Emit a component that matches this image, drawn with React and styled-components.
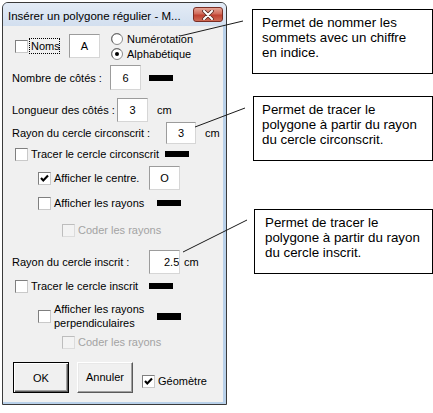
import React from "react";
import styled, { createGlobalStyle } from "styled-components";

const GlobalStyle = createGlobalStyle`
  html, body { margin: 0; padding: 0; background: #fff; }
  body {
    width: 433px; height: 413px; overflow: hidden;
    font-family: "Liberation Sans", Arial, sans-serif;
  }
`;

const Page = styled.div`
  position: relative;
  width: 433px;
  height: 413px;
  box-sizing: border-box;
  padding: 2px 0 0 2px;
  display: flex;
  align-items: flex-start;
`;

const Dialog = styled.div`
  width: 225px;
  height: 403px;
  box-sizing: border-box;
  flex-shrink: 0;
  border: 1px solid #3a3a3a;
  border-radius: 6px 6px 0 0;
  background: #b9d1ea;
  display: flex;
  flex-direction: column;
  overflow: hidden;
`;

const TitleBar = styled.div`
  height: 23px;
  flex-shrink: 0;
  box-sizing: border-box;
  display: flex;
  align-items: center;
  justify-content: space-between;
  padding: 0 3px 0 5px;
  background: linear-gradient(#e3ebf6, #d2dfef);
`;

const Title = styled.span`
  font-size: 11.5px;
  color: #000;
  padding-top: 2px;
  white-space: nowrap;
`;

const CloseButton = styled.span`
  width: 30px;
  height: 15px;
  box-sizing: border-box;
  border: 1px solid #7a2d24;
  border-radius: 3px;
  background: linear-gradient(#e6a596, #d06a5a 45%, #c04233 55%, #cf6b55);
  display: flex;
  align-items: center;
  justify-content: center;
`;

const Client = styled.div`
  flex: 1;
  margin: 0 3px 2px 0;
  background: #f0f0f0;
  display: flex;
  flex-direction: column;
  font-size: 11px;
  color: #000;
`;

const Row = styled.div`
  display: flex;
  align-items: center;
  flex-shrink: 0;
  height: ${(p) => p.$h}px;
  margin-top: ${(p) => p.$mt}px;
  padding-left: ${(p) => p.$pl}px;
`;

const Label = styled.span`
  width: ${(p) => p.$w}px;
  flex-shrink: 0;
  white-space: nowrap;
`;

const TextBox = styled.span`
  width: ${(p) => p.$w}px;
  height: ${(p) => p.$h}px;
  margin-left: ${(p) => p.$ml || 0}px;
  flex-shrink: 0;
  box-sizing: border-box;
  background: #fff;
  border: 1px solid;
  border-color: #9c9c9c #d6d6d6 #d6d6d6 #9c9c9c;
  display: flex;
  align-items: center;
  justify-content: ${(p) => (p.$left ? "flex-start" : "center")};
  padding-left: ${(p) => p.$pad || 0}px;
  overflow: hidden;
  white-space: nowrap;
`;

const Clip = styled.span`
  display: block;
  width: ${(p) => p.$w}px;
  overflow: hidden;
  white-space: nowrap;
`;

const Unit = styled.span`
  margin-left: ${(p) => p.$ml}px;
`;

const Swatch = styled.span`
  width: 24px;
  height: ${(p) => p.$h || 6}px;
  margin-left: ${(p) => p.$ml || 0}px;
  flex-shrink: 0;
  background: #000;
`;

const Box = styled.span`
  width: 13px;
  height: 13px;
  flex-shrink: 0;
  box-sizing: border-box;
  border: 1px solid;
  border-color: ${(p) =>
    p.$disabled ? "#bdbdbd #dcdcdc #dcdcdc #bdbdbd" : "#7f7f7f #c9c9c9 #c9c9c9 #7f7f7f"};
  background: ${(p) => (p.$disabled ? "#f3f3f3" : "#fff")};
  display: flex;
  align-items: center;
  justify-content: center;
`;

const CheckField = styled.span`
  display: flex;
  align-items: center;
  gap: 3px;
  flex-shrink: 0;
  width: ${(p) => (p.$w ? `${p.$w}px` : "auto")};
  margin-left: ${(p) => p.$ml || 0}px;
  align-self: ${(p) => (p.$bottom ? "flex-end" : "center")};
  margin-bottom: ${(p) => (p.$bottom ? 5 : 0)}px;
  color: ${(p) => (p.$disabled ? "#a3a3a3" : "#000")};
`;

const CheckText = styled.span`
  line-height: 14px;
  white-space: nowrap;
`;

const FocusLabel = styled.span`
  width: 31px;
  height: 16px;
  margin-left: 1px;
  flex-shrink: 0;
  box-sizing: border-box;
  border: 1px dotted #000;
  padding-left: 1px;
  display: flex;
  align-items: center;
`;

const RadioGroup = styled.span`
  display: flex;
  flex-direction: column;
  margin-left: ${(p) => p.$ml}px;
`;

const RadioItem = styled.span`
  display: flex;
  align-items: center;
  gap: 4px;
  height: 15px;
`;

const ButtonBtn = styled.span`
  width: 56px;
  height: 31px;
  flex-shrink: 0;
  margin-left: ${(p) => p.$ml || 0}px;
  box-sizing: border-box;
  background: #f0f0f0;
  border: 1px solid;
  border-color: ${(p) => (p.$default ? "#000" : "#fff #5a5a5a #5a5a5a #fff")};
  box-shadow: ${(p) =>
    p.$default
      ? "inset 1px 1px #fff, inset -1px -1px #5a5a5a, inset -2px -2px #a0a0a0"
      : "inset -1px -1px #a0a0a0, inset 1px 1px #e8e8e8"};
  display: flex;
  align-items: center;
  justify-content: center;
  padding-bottom: ${(p) => p.$raise || 0}px;
`;

const Notes = styled.div`
  display: flex;
  flex-direction: column;
  margin-left: 25px;
`;

const Note = styled.div`
  width: ${(p) => p.$w}px;
  height: 65px;
  margin-top: ${(p) => p.$mt}px;
  margin-left: ${(p) => p.$ml}px;
  box-sizing: border-box;
  border: 1px solid #000;
  background: #fff;
  padding: 5px 0 0 ${(p) => p.$pl}px;
  font-size: 13.33px;
  line-height: 15px;
  color: #000;
  white-space: nowrap;
`;

const Overlay = styled.svg`
  position: absolute;
  left: 0;
  top: 0;
  pointer-events: none;
`;

function Check({ checked, disabled }) {
  return (
    <Box $disabled={disabled}>
      {checked && (
        <svg width="9" height="9" viewBox="0 0 9 9">
          <polyline points="1,4 3.3,6.5 8,1.5" fill="none" stroke="#000" strokeWidth="2.1" />
        </svg>
      )}
    </Box>
  );
}

function Radio({ checked }) {
  return (
    <svg width="12" height="12" viewBox="0 0 12 12" style={{ flexShrink: 0 }}>
      <circle cx="6" cy="6" r="5.5" fill="#fff" stroke="#8a8a8a" />
      <path d="M2.2 9.5 A5 5 0 0 1 9.5 2.2" fill="none" stroke="#6a6a6a" strokeWidth="1" />
      {checked && <circle cx="6" cy="6" r="2" fill="#000" />}
    </svg>
  );
}

function Field({ w, ml, checked, disabled, bottom, children }) {
  return (
    <CheckField $w={w} $ml={ml} $disabled={disabled} $bottom={bottom}>
      <Check checked={checked} disabled={disabled} />
      <CheckText>{children}</CheckText>
    </CheckField>
  );
}

export default function App() {
  return (
    <>
      <GlobalStyle />
      <Page>
        <Dialog>
          <TitleBar>
            <Title>Insérer un polygone régulier - M...</Title>
            <CloseButton>
              <svg width="12" height="10" viewBox="0 0 12 10">
                <path d="M2 1 L10 9 M10 1 L2 9" stroke="#5a2a24" strokeWidth="3.6" strokeLinecap="round" />
                <path d="M2 1 L10 9 M10 1 L2 9" stroke="#fff" strokeWidth="2" strokeLinecap="round" />
              </svg>
            </CloseButton>
          </TitleBar>
          <Client>
            <Row $mt={5} $h={30} $pl={12}>
              <Check />
              <FocusLabel>Noms</FocusLabel>
              <TextBox $w={31} $h={24} $ml={9}>A</TextBox>
              <RadioGroup $ml={11}>
                <RadioItem>
                  <Radio />
                  Numérotation
                </RadioItem>
                <RadioItem>
                  <Radio checked />
                  Alphabétique
                </RadioItem>
              </RadioGroup>
            </Row>

            <Row $mt={4} $h={25} $pl={9}>
              <Label $w={98}>Nombre de côtés :</Label>
              <TextBox $w={31} $h={25}>6</TextBox>
              <Swatch $ml={8} />
            </Row>

            <Row $mt={8} $h={24} $pl={9}>
              <Label $w={105}>Longueur des côtés :</Label>
              <TextBox $w={31} $h={24}>3</TextBox>
              <Unit $ml={9}>cm</Unit>
            </Row>

            <Row $mt={0} $h={22} $pl={9}>
              <Label $w={154}>Rayon du cercle circonscrit :</Label>
              <TextBox $w={30} $h={22}>3</TextBox>
              <Unit $ml={9}>cm</Unit>
            </Row>

            <Row $mt={2} $h={16} $pl={12}>
              <Field w={150}>Tracer le cercle circonscrit</Field>
              <Swatch />
            </Row>

            <Row $mt={4} $h={24} $pl={35}>
              <Field w={111} checked>Afficher le centre.</Field>
              <TextBox $w={31} $h={24}>O</TextBox>
            </Row>

            <Row $mt={5} $h={16} $pl={35}>
              <Field w={119}>Afficher les rayons</Field>
              <Swatch />
            </Row>

            <Row $mt={11} $h={16} $pl={59}>
              <Field disabled>Coder les rayons</Field>
            </Row>

            <Row $mt={12} $h={24} $pl={9}>
              <Label $w={137}>Rayon du cercle inscrit :</Label>
              <TextBox $w={31} $h={24} $left $pad={14}>
                <Clip $w={15}>2.59</Clip>
              </TextBox>
              <Unit $ml={4}>cm</Unit>
            </Row>

            <Row $mt={4} $h={16} $pl={12}>
              <Field w={134}>Tracer le cercle inscrit</Field>
              <Swatch />
            </Row>

            <Row $mt={8} $h={28} $pl={35}>
              <Field w={119}>
                Afficher les rayons
                <br />
                perpendiculaires
              </Field>
              <Swatch $h={7} />
            </Row>

            <Row $mt={4} $h={16} $pl={59}>
              <Field disabled>Coder les rayons</Field>
            </Row>

            <Row $mt={12} $h={31} $pl={10}>
              <ButtonBtn $default>OK</ButtonBtn>
              <ButtonBtn $ml={8} $raise={2}>Annuler</ButtonBtn>
              <Field ml={9} checked bottom>Géomètre</Field>
            </Row>
          </Client>
        </Dialog>

        <Notes>
          <Note $mt={7} $ml={0} $w={181} $pl={9}>
            Permet de nommer les
            <br />
            sommets avec un chiffre
            <br />
            en indice.
          </Note>
          <Note $mt={22} $ml={1} $w={180} $pl={8}>
            Permet de tracer le
            <br />
            polygone à partir du rayon
            <br />
            du cercle circonscrit.
          </Note>
          <Note $mt={48} $ml={2} $w={179} $pl={10}>
            Permet de tracer le
            <br />
            polygone à partir du rayon
            <br />
            du cercle inscrit.
          </Note>
        </Notes>

        <Overlay width="433" height="413" viewBox="0 0 433 413">
          <line x1="243" y1="21" x2="180" y2="36" stroke="#1a1a1a" strokeWidth="1" />
          <line x1="245" y1="108" x2="195" y2="127" stroke="#1a1a1a" strokeWidth="1" />
          <line x1="247" y1="220" x2="183" y2="252" stroke="#1a1a1a" strokeWidth="1" />
        </Overlay>
      </Page>
    </>
  );
}
